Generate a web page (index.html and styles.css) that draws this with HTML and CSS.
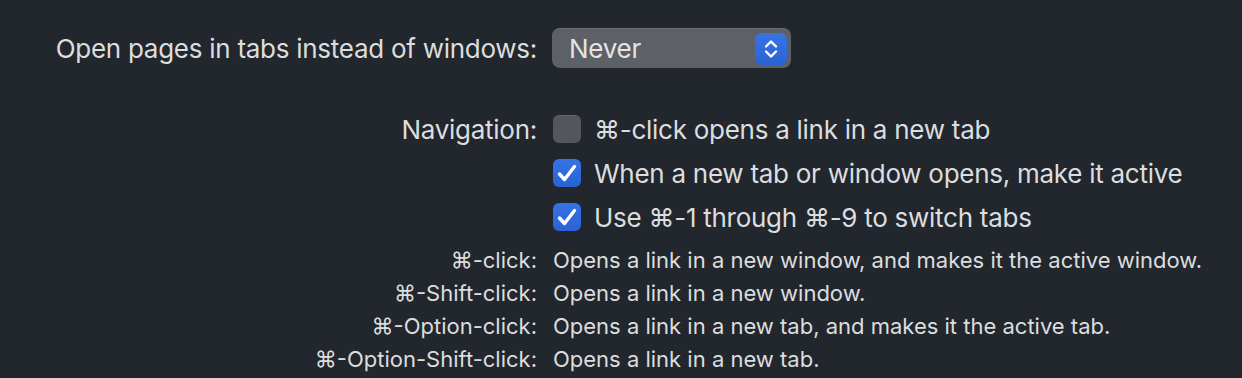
FILE: index.html
```html
<!DOCTYPE html>
<html lang="en">
<head>
  <meta charset="UTF-8" />
  <title>Tabs</title>
  <link rel="stylesheet" href="styles.css">
</head>
<body>
  <div class="pane">
    <div class="row row-popup">
      <div class="label">Open pages in tabs instead of windows:</div>
      <div class="popup">
        <span class="popup-value">Never</span>
        <span class="stepper">
          <svg width="20" height="26" viewBox="0 0 20 26">
            <path d="M5 10.5 L10 5.5 L15 10.5" fill="none" stroke="#fff" stroke-width="2.4" stroke-linecap="round" stroke-linejoin="round"/>
            <path d="M5 15.5 L10 20.5 L15 15.5" fill="none" stroke="#fff" stroke-width="2.4" stroke-linecap="round" stroke-linejoin="round"/>
          </svg>
        </span>
      </div>
    </div>

    <div class="row row-check first-check">
      <div class="label">Navigation:</div>
      <div class="check-item">
        <span class="box"></span>
        <span>⌘-click opens a link in a new tab</span>
      </div>
    </div>
    <div class="row row-check">
      <div class="label"></div>
      <div class="check-item">
        <span class="box checked">
          <svg width="28" height="28" viewBox="0 0 28 28"><path d="M6.5 15 L11.5 20.5 L21.5 7.5" fill="none" stroke="#fff" stroke-width="3.4" stroke-linecap="round" stroke-linejoin="round"/></svg>
        </span>
        <span>When a new tab or window opens, make it active</span>
      </div>
    </div>
    <div class="row row-check">
      <div class="label"></div>
      <div class="check-item">
        <span class="box checked">
          <svg width="28" height="28" viewBox="0 0 28 28"><path d="M6.5 15 L11.5 20.5 L21.5 7.5" fill="none" stroke="#fff" stroke-width="3.4" stroke-linecap="round" stroke-linejoin="round"/></svg>
        </span>
        <span>Use ⌘-1 through ⌘-9 to switch tabs</span>
      </div>
    </div>

    <div class="row row-small first-small">
      <div class="label">⌘-click:</div>
      <div class="desc">Opens a link in a new window, and makes it the active window.</div>
    </div>
    <div class="row row-small">
      <div class="label">⌘-Shift-click:</div>
      <div class="desc">Opens a link in a new window.</div>
    </div>
    <div class="row row-small">
      <div class="label">⌘-Option-click:</div>
      <div class="desc">Opens a link in a new tab, and makes it the active tab.</div>
    </div>
    <div class="row row-small">
      <div class="label">⌘-Option-Shift-click:</div>
      <div class="desc">Opens a link in a new tab.</div>
    </div>
  </div>
</body>
</html>
```

FILE: styles.css
```css
body {
  margin: 0;
  background-color: #22272e;
  color: #dcdddf;
  font-family: 'Inter', 'DejaVu Sans', sans-serif;
}
.pane {
  padding-top: 28px;
}
.row {
  display: flex;
  align-items: center;
}
.label {
  width: 537px;
  flex: none;
  text-align: right;
  margin-right: 16px;
  white-space: nowrap;
}
.row-popup {
  height: 40px;
  font-size: 26px;
  letter-spacing: -0.27px;
}
.popup {
  width: 239px;
  height: 40px;
  margin-left: -1px;
  box-sizing: border-box;
  border-radius: 8px;
  background-color: #5d6066;
  border-top: 1px solid #6b6e73;
  display: flex;
  align-items: center;
  justify-content: space-between;
  padding: 0 4px 0 17px;
}
.popup-value {
  color: #e4e4e5;
  font-size: 26px;
}
.stepper {
  width: 32px;
  height: 32px;
  border-radius: 7px;
  background: linear-gradient(#3775e6, #2a62d4);
  display: flex;
  align-items: center;
  justify-content: center;
}
.row-check {
  height: 44px;
  font-size: 26px;
  letter-spacing: -0.27px;
}
.first-check {
  margin-top: 39px;
}
.check-item {
  display: flex;
  align-items: center;
  gap: 13px;
}
.box {
  width: 28px;
  height: 28px;
  box-sizing: border-box;
  border-radius: 6px;
  background-color: #53565c;
  border-top: 1px solid #62656a;
  display: flex;
  align-items: center;
  justify-content: center;
}
.box.checked {
  background: linear-gradient(#3573e4, #2a62d4);
  border-top: none;
}
.row-small {
  height: 33px;
  font-size: 22px;
}
.first-small {
  margin-top: 4px;
}
```
